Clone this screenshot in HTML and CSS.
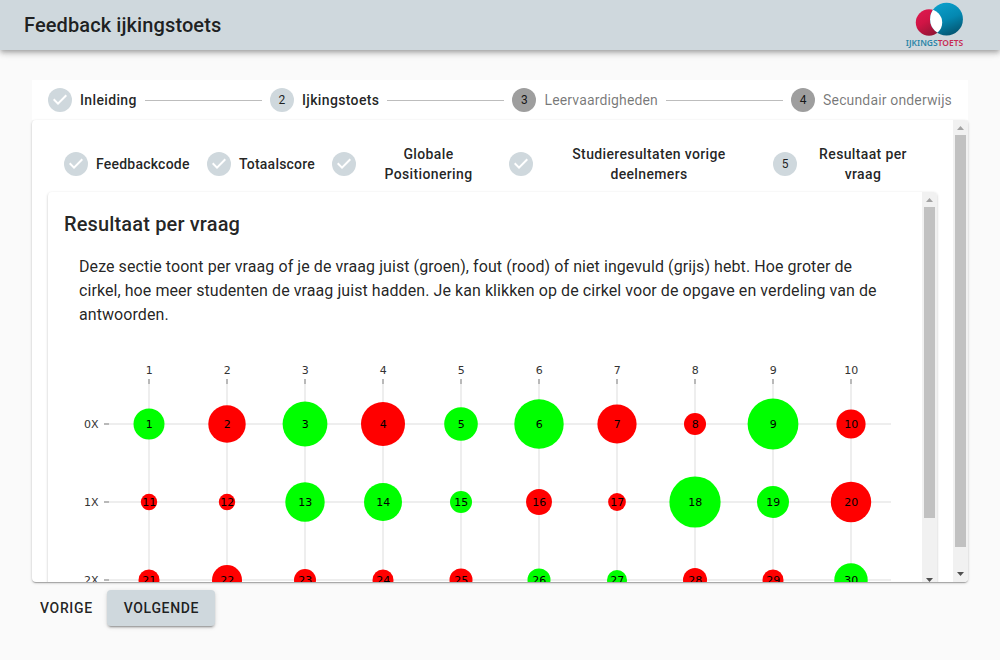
FILE: index.html
```
<!DOCTYPE html>
<html lang="nl">
<head>
<meta charset="utf-8">
<title>Feedback ijkingstoets</title>
<link rel="stylesheet" href="styles.css">
</head>
<body>
<header class="appbar">
  <h1 class="title">Feedback ijkingstoets</h1>
  <svg class="logo" width="60" height="46" viewBox="0 0 60 46">
    <defs>
      <linearGradient id="red" x1="0" y1="0" x2=".6" y2="1"><stop offset="0" stop-color="#e01a50"/><stop offset=".5" stop-color="#d01445"/><stop offset="1" stop-color="#941535"/></linearGradient>
      <linearGradient id="blue" x1=".3" y1="0" x2=".7" y2="1"><stop offset="0" stop-color="#0a9fcb"/><stop offset=".5" stop-color="#0488b1"/><stop offset="1" stop-color="#04536e"/></linearGradient>
      <clipPath id="lens"><circle cx="24" cy="20.5" r="13.2"/></clipPath>
    </defs>
    <circle cx="24" cy="20.5" r="13.2" fill="url(#red)"/>
    <circle cx="41.5" cy="17.2" r="16.4" fill="url(#blue)"/>
    <circle cx="41.5" cy="17.2" r="16.4" fill="#fff" clip-path="url(#lens)"/>
    <text class="logo-text" x=".8" y="44" textLength="57.4" lengthAdjust="spacingAndGlyphs"><tspan fill="#2b86a8">IJKINGS</tspan><tspan fill="#c72c55">TOETS</tspan></text>
  </svg>
</header>
<main class="page">
  <div class="stepper">
    <div class="step"><span class="dot done"></span><span class="label">Inleiding</span></div>
    <div class="line"></div>
    <div class="step"><span class="dot">2</span><span class="label">Ijkingstoets</span></div>
    <div class="line"></div>
    <div class="step off"><span class="dot">3</span><span class="label">Leervaardigheden</span></div>
    <div class="line"></div>
    <div class="step off"><span class="dot">4</span><span class="label">Secundair onderwijs</span></div>
  </div>
  <section class="paper outer">
    <div class="outer-body">
      <div class="stepper substeps">
        <div class="step"><span class="dot done"></span><span class="label">Feedbackcode</span></div>
        <div class="step"><span class="dot done"></span><span class="label">Totaalscore</span></div>
        <div class="step"><span class="dot done"></span><span class="label">Globale<br>Positionering</span></div>
        <div class="step"><span class="dot done"></span><span class="label">Studieresultaten vorige<br>deelnemers</span></div>
        <div class="step"><span class="dot">5</span><span class="label">Resultaat per<br>vraag</span></div>
      </div>
      <div class="paper inner">
        <div class="inner-body">
          <h2 class="title">Resultaat per vraag</h2>
          <p class="intro">Deze sectie toont per vraag of je de vraag juist (groen), fout (rood) of niet ingevuld (grijs) hebt. Hoe groter de cirkel, hoe meer studenten de vraag juist hadden. Je kan klikken op de cirkel voor de opgave en verdeling van de antwoorden.</p>
          <svg class="chart" id="chart" width="820" height="256"></svg>
        </div>
        <div class="scrollbar"><i class="up"></i><i class="thumb"></i><i class="down"></i></div>
      </div>
    </div>
    <div class="scrollbar"><i class="up"></i><i class="thumb"></i><i class="down"></i></div>
  </section>
  <div class="actions">
    <button class="btn flat">Vorige</button>
    <button class="btn raised">Volgende</button>
  </div>
</main>
<script src="chart.js"></script>
</body>
</html>
```
FILE: styles.css
```
* { box-sizing: border-box; }
body {
  margin: 0;
  height: 660px;
  overflow: hidden;
  background: #fafafa;
  color: rgba(0, 0, 0, .87);
  font-family: Roboto, sans-serif;
}
.appbar {
  display: flex;
  justify-content: space-between;
  align-items: center;
  height: 50px;
  padding: 0 35px 0 24px;
  background: #cfd8dd;
  box-shadow: 0 2px 4px -1px rgba(0,0,0,.2), 0 4px 5px 0 rgba(0,0,0,.14), 0 1px 10px 0 rgba(0,0,0,.12);
}
.logo { margin-top: -1px; }
.logo-text { font: 600 8.6px "Noto Sans", sans-serif; }
.title {
  margin: 0;
  font-size: 20px;
  font-weight: 500;
  line-height: 32px;
  letter-spacing: .0075em;
}
.appbar .title { letter-spacing: .1px; }
.page { padding: 30px 32px 0; }
.stepper {
  display: flex;
  align-items: center;
  gap: 8px;
  padding: 8px 16px;
  background: #fff;
  font-size: 14px;
  line-height: 20px;
  letter-spacing: .36px;
}
.step { display: flex; align-items: center; gap: 8px; font-weight: 500; white-space: nowrap; }
.line { flex: 1; border-top: 1px solid #bdbdbd; }
.dot {
  display: flex;
  flex: none;
  align-items: center;
  justify-content: center;
  width: 24px;
  height: 24px;
  border-radius: 50%;
  background: #cfd8dd;
  font-size: 12px;
  font-weight: 400;
  letter-spacing: 0;
}
.done::after {
  content: "";
  width: 24px;
  height: 24px;
  background: #fff;
  clip-path: polygon(10px 17px, 5px 12px, 6.4px 10.6px, 10px 14.2px, 17.6px 6.6px, 19px 8px);
}
.off .label { color: rgba(0, 0, 0, .54); font-weight: 400; letter-spacing: .15px; }
.off .dot { background: #9e9e9e; }
.paper {
  display: flex;
  overflow: hidden;
  border-radius: 4px;
  background: #fff;
  box-shadow: 0 1px 3px 0 rgba(0,0,0,.2), 0 1px 1px 0 rgba(0,0,0,.14), 0 2px 1px -1px rgba(0,0,0,.12);
}
.outer { height: 462px; }
.outer-body { flex: 1; padding: 16px 16px 0; overflow: hidden; }
.substeps { display: grid; grid-template-columns: 127px 109px 161px 248px 148px; gap: 16px; height: 56px; }
.substeps .label { flex: 1; text-align: center; }
.substeps .step:nth-child(-n+2) .label { letter-spacing: .22px; text-align: left; }
.inner { height: 400px; }
.inner-body { flex: 1; padding: 16px 16px 0; overflow: hidden; }
.intro {
  margin: 15px 15px;
  font-size: 16px;
  line-height: 24px;
  letter-spacing: .073px;
}
.chart { display: block; margin-left: 15px; font: 11px "DejaVu Sans", sans-serif; }
.grid { stroke: #eee; stroke-width: 2; }
.tick { stroke: #b9b9b9; stroke-width: 2; }
.axis { fill: #333; }
.right { fill: #0f0; }
.wrong { fill: #f00; }
.scrollbar {
  display: flex;
  flex-direction: column;
  align-items: center;
  width: 15px;
  background: #f1f1f1;
}
.scrollbar i { flex: none; }
.thumb { width: 11px; height: 412px; background: #c1c1c1; }
.inner .thumb { height: 311px; }
.up, .down { width: 7px; height: 4px; }
.up { margin: 6px 0 5px; background: #a3a3a3; clip-path: polygon(50% 0, 100% 100%, 0 100%); }
.down { margin: auto 0 6px; background: #505050; clip-path: polygon(0 0, 100% 0, 50% 100%); }
.inner .down { margin-bottom: 10px; }
.actions { display: flex; gap: 8px; padding-top: 8px; }
.btn {
  height: 36px;
  padding: 0 8px;
  border: 0;
  border-radius: 4px;
  background: none;
  color: inherit;
  font: 500 14px Roboto, sans-serif;
  letter-spacing: .65px;
  text-transform: uppercase;
}
.flat { width: 67.4px; white-space: nowrap; }
.raised {
  width: 108px;
  padding: 0 16px;
  background: #cfd8dd;
  box-shadow: 0 3px 1px -2px rgba(0,0,0,.2), 0 2px 2px 0 rgba(0,0,0,.14), 0 1px 5px 0 rgba(0,0,0,.12);
}
```
FILE: chart.js
```
// Radius per question; a negative radius marks a wrong answer.
const rows = [
  [15.5, -18.7, 22.4, -22, 16.8, 24.7, -19.6, -11, 25.4, -14.6],
  [-8.2, -8.2, 19.7, 19, 11, -13, -8.9, 25.6, 16, -20.2],
  [-10.5, -15, -11, -10.5, -11.5, 11.5, 10, -12, -10.5, 16.7]
];
const colX = c => 70 + c * 78;
const rowY = r => 82 + r * 78;
let out = '';
for (let c = 0; c < 10; c++) {
  const x = colX(c);
  out += `<path class="grid" d="M${x} 42V256"/><path class="tick" d="M${x} 37v5"/>` +
    `<text class="axis" x="${x + .2}" y="32" text-anchor="middle">${c + 1}</text>`;
}
rows.forEach((row, r) => {
  const y = rowY(r);
  out += `<path class="grid" d="M30 ${y}H812"/><path class="tick" d="M25 ${y}h5"/>` +
    `<text class="axis" x="19.5" y="${y + 4}" text-anchor="end">${r}X</text>`;
});
rows.forEach((row, r) => row.forEach((v, c) => {
  const x = colX(c), y = rowY(r);
  out += `<circle class="${v > 0 ? 'right' : 'wrong'}" cx="${x}" cy="${y}" r="${Math.abs(v)}"/>` +
    `<text x="${x + .3}" y="${y + 4}" text-anchor="middle">${r * 10 + c + 1}</text>`;
}));
document.getElementById('chart').innerHTML = out;
```
